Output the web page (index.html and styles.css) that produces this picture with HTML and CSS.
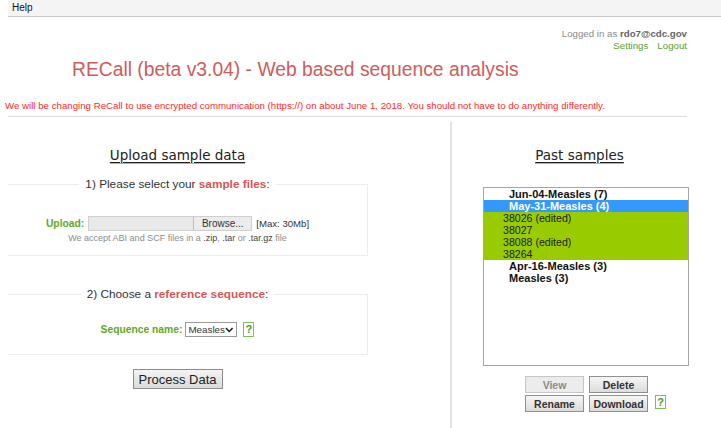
FILE: index.html
```html
<!DOCTYPE html>
<html>
<head>
<meta charset="utf-8">
<title>RECall</title>
<link rel="stylesheet" href="styles.css">
</head>
<body>
<div class="menubar"><span class="menu-item">Help</span></div>

<div class="page">
  <div class="account">
    <div class="login">Logged in as <b>rdo7@cdc.gov</b></div>
    <div class="account-links"><a>Settings</a><a>Logout</a></div>
  </div>

  <h1 class="title">RECall (beta v3.04) - Web based sequence analysis</h1>

  <div class="notice-wrap">
    <p class="notice">We will be changing ReCall to use encrypted communication (https://) on about June 1, 2018. You should not have to do anything differently.</p>
  </div>

  <div class="columns">
    <section class="col-left">
      <h2 class="section-title"><span>Upload sample data</span></h2>

      <fieldset class="step step-upload">
        <legend>1) Please select your <b class="hl">sample files</b>:</legend>
        <div class="upload-row">
          <span class="label">Upload:</span>
          <span class="file-input"><span class="file-name"></span><span class="browse">Browse...</span></span>
          <span class="max">[Max: 30Mb]</span>
        </div>
        <div class="hint">We accept ABI and SCF files in a <b>.zip</b>, <b>.tar</b> or <b>.tar.gz</b> file</div>
      </fieldset>

      <fieldset class="step step-ref">
        <legend>2) Choose a <b class="hl">reference sequence</b>:</legend>
        <div class="seq-row">
          <span class="label">Sequence name:</span>
          <span class="select">Measles<svg class="chev" width="9" height="6" viewBox="0 0 9 6"><path d="M1 1 L4.5 4.5 L8 1" fill="none" stroke="#222" stroke-width="1.6"/></svg></span>
          <span class="help">?</span>
        </div>
      </fieldset>

      <div class="process-wrap"><button class="process">Process Data</button></div>
    </section>

    <section class="col-right">
      <h2 class="section-title"><span>Past samples</span></h2>

      <div class="listbox">
        <div class="item group">Jun-04-Measles (7)</div>
        <div class="item group selected">May-31-Measles (4)</div>
        <div class="item sample">38026 (edited)</div>
        <div class="item sample">38027</div>
        <div class="item sample">38088 (edited)</div>
        <div class="item sample">38264</div>
        <div class="item group">Apr-16-Measles (3)</div>
        <div class="item group">Measles (3)</div>
      </div>

      <div class="actions">
        <div class="action-grid">
          <button class="act" disabled>View</button>
          <button class="act">Delete</button>
          <button class="act">Rename</button>
          <button class="act">Download</button>
        </div>
        <span class="help help-actions">?</span>
      </div>
    </section>
  </div>
</div>
</body>
</html>
```

FILE: styles.css
```css
html, body {
  margin: 0;
  padding: 0;
  background: #fff;
  font-family: "Liberation Sans", Arial, sans-serif;
  color: #222;
  overflow: hidden;
}

/* top menu strip */
.menubar {
  margin-left: 8px;
  height: 16px;
  background: #f4f4f4;
  border-bottom: 1px solid #c8c8c8;
  font-size: 10px;
  line-height: 16px;
  padding-left: 4px;
}
.menu-item { color: #111; }

.page {
  width: 713px;
  padding-left: 8px;
}

/* account block, top right */
.account {
  width: 679px;
  text-align: right;
  font-size: 9.7px;
  line-height: 12px;
  padding-top: 11px;
}
.login { color: #8a8a8a; }
.login b { color: #666; }
.account-links a {
  color: #5aa22c;
  margin-left: 9px;
}

.title {
  margin: 6px 0 0 64px;
  font-weight: normal;
  font-size: 19.3px;
  line-height: 24px;
  color: #cf5b5b;
}

.notice-wrap {
  width: 679px;
  border-bottom: 1px solid #dcdcdc;
  padding: 18px 0 4px;
}
.notice {
  margin: 0 0 0 -3px;
  font-size: 9.7px;
  line-height: 12px;
  color: #ff2a2a;
  white-space: nowrap;
}

.columns {
  display: flex;
  margin-top: 5px;
  height: 312px;
}

.col-left {
  width: 442px;
  border-right: 2px solid #e2e2e2;
}
.col-right {
  flex: 1;
}

.section-title {
  margin: 0;
  padding-top: 24px;
  font-family: "DejaVu Sans", Verdana, sans-serif;
  font-weight: normal;
  font-size: 13.5px;
  line-height: 18px;
  color: #222;
  text-align: center;
}
.col-left .section-title { width: 339px; }
.col-right .section-title { padding-right: 14px; }
.section-title span {
  text-decoration: underline;
  text-underline-offset: 2px;
  box-shadow: 0 1px 0 #b0b0b0;
}

/* form steps */
.step {
  width: 339px;
  margin: 0;
  padding: 0 20px 0 0;
  border: 1px solid #ececec;
  border-left: none;
  text-align: center;
  font-size: 10px;
}
.step legend {
  margin: 0 auto;
  padding: 0 6px;
  font-size: 11.8px;
  color: #333;
}
.hl { color: #d65656; }

.step-upload {
  margin-top: 13px;
  height: 77px;
}
.step-ref {
  margin-top: 31px;
  height: 66px;
}

.label {
  color: #63a825;
  font-weight: bold;
  font-size: 10.3px;
}

.upload-row {
  display: flex;
  justify-content: center;
  align-items: center;
  margin-top: 25px;
  height: 14px;
}
.file-input {
  display: flex;
  height: 13px;
  margin-left: 4px;
  border: 1px solid #cfcfcf;
  background: #e9e9e9;
}
.file-name { width: 104px; }
.browse {
  width: 57px;
  border-left: 1px solid #bdbdbd;
  background: #ececec;
  color: #333;
  font-size: 10px;
  line-height: 13px;
}
.max {
  margin-left: 4px;
  color: #333;
  font-size: 9.6px;
}
.hint {
  margin-top: 2px;
  color: #8b8b8b;
  font-size: 9px;
  line-height: 13px;
}
.hint b { font-weight: normal; color: #444; }

.seq-row {
  display: flex;
  justify-content: center;
  align-items: center;
  margin-top: 21px;
}
.select {
  display: flex;
  align-items: center;
  justify-content: space-between;
  box-sizing: border-box;
  width: 52px;
  height: 15px;
  margin-left: 3px;
  padding: 0 3px 0 2px;
  border: 1px solid #9a9a9a;
  background: #fff;
  color: #333;
  font-size: 9.8px;
}
.help {
  display: inline-block;
  box-sizing: border-box;
  width: 11px;
  height: 15px;
  margin-left: 6px;
  border: 1px solid #7cc05a;
  color: #4a9a1c;
  font-size: 11px;
  font-weight: bold;
  line-height: 13px;
  text-align: center;
}

.process-wrap {
  width: 339px;
  text-align: center;
  margin-top: 14px;
}
.process {
  width: 90px;
  height: 20px;
  padding: 0;
  border: 1px solid #8d8d8d;
  background: linear-gradient(#f4f4f4, #dadada);
  font-family: "Liberation Sans", Arial, sans-serif;
  font-size: 13px;
  color: #222;
}

/* past samples list */
.listbox {
  box-sizing: border-box;
  width: 206px;
  height: 179px;
  margin: 23px 0 0 31px;
  border: 1px solid #a6a6a6;
  font-size: 10.6px;
}
.item {
  height: 12px;
  line-height: 12px;
  white-space: nowrap;
}
.item.group {
  font-weight: bold;
  padding-left: 25px;
  color: #111;
  font-size: 11px;
}
.item.group.selected {
  background: #3399ff;
  color: #fff;
}
.item.sample {
  padding-left: 19px;
  background: #99cc00;
  color: #1a1a1a;
}

.actions {
  display: flex;
  align-items: flex-end;
  margin: 10px 0 0 73px;
}
.action-grid {
  display: grid;
  grid-template-columns: 59px 59px;
  column-gap: 5px;
  row-gap: 2px;
}
.act {
  height: 17px;
  padding: 0;
  border: 1px solid #8f8f8f;
  background: linear-gradient(#f6f6f6, #dcdcdc);
  font-family: "Liberation Sans", Arial, sans-serif;
  font-size: 10.5px;
  font-weight: bold;
  color: #333;
}
.act:disabled {
  border-color: #c6c6c6;
  background: #ececec;
  color: #8a8a8a;
}
.help-actions {
  margin: 0 0 3px 7px;
  height: 14px;
  line-height: 12px;
}
```
